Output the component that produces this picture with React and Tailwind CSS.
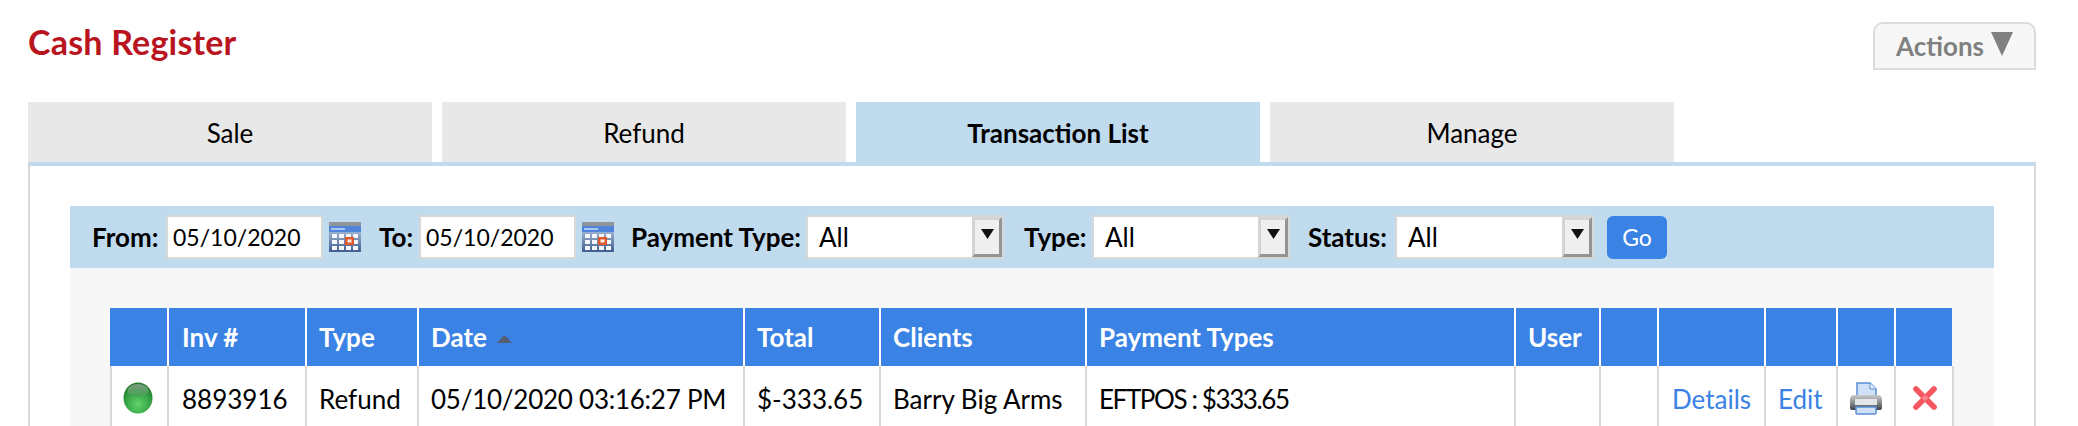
import React from "react";

const Calendar = () => (
  <svg width="32" height="30" viewBox="0 0 32 30" className="block shrink-0 blur-[0.4px]">
    <defs>
      <linearGradient id="calBody" x1="0" y1="0" x2="0" y2="1">
        <stop offset="0" stopColor="#b4c8e4" />
        <stop offset="1" stopColor="#3f5f8e" />
      </linearGradient>
    </defs>
    <rect x="0" y="0" width="32" height="5" fill="#8f9499" />
    <rect x="0" y="4" width="32" height="26" fill="url(#calBody)" />
    <rect x="0" y="4" width="32" height="6" fill="#4f84da" />
    <rect x="2" y="6" width="14" height="2" fill="#a8c6f0" />
    {[3, 10, 17, 24].map((x) =>
      [12, 18, 24].map((y) => <rect key={`${x}-${y}`} x={x} y={y} width="5" height="4" fill="#f4f7fc" />)
    )}
    <rect x="16" y="15" width="9" height="8" fill="#e2582e" />
    <rect x="18.5" y="17.5" width="4" height="3" fill="#f7f2ea" />
  </svg>
);

const Select = ({ width, label = "All" }) => (
  <div className={`flex h-[44px] shrink-0 border-2 border-[#d8d8d8] bg-white ${width}`}>
    <span className="flex-1 self-center pl-[11px] text-[26px] font-normal leading-none text-black">{label}</span>
    <div className="flex h-full w-[30px] items-center justify-center border-[3px] border-b-[#949494] border-l-[#d4d4d4] border-r-[#949494] border-t-[#d4d4d4] bg-[#efefef] pb-[6px]">
      <svg width="13" height="10" viewBox="0 0 13 10"><path d="M0 0h13L6.5 10z" fill="#111" /></svg>
    </div>
  </div>
);

const DateInput = () => (
  <div className="flex h-[44px] w-[157px] shrink-0 items-center border-2 border-[#d8d8d8] bg-white pl-[5px] text-[23px] font-normal leading-none text-black">
    05/10/2020
  </div>
);

const Orb = () => (
  <svg width="30" height="32" viewBox="0 0 30 32" className="block blur-[0.4px]">
    <defs>
      <radialGradient id="orb" cx="0.5" cy="0.7" r="0.65">
        <stop offset="0" stopColor="#5ed36b" />
        <stop offset="0.65" stopColor="#37a345" />
        <stop offset="1" stopColor="#1f7a2c" />
      </radialGradient>
      <linearGradient id="orbTop" x1="0" y1="0" x2="0" y2="1">
        <stop offset="0" stopColor="#7c9a80" />
        <stop offset="1" stopColor="#3fa64c" />
      </linearGradient>
    </defs>
    <ellipse cx="15" cy="16" rx="14.5" ry="15.5" fill="url(#orb)" />
    <ellipse cx="15" cy="8.5" rx="10.5" ry="6.5" fill="url(#orbTop)" />
  </svg>
);

const Printer = () => (
  <svg width="34" height="33" viewBox="0 0 34 33" className="block blur-[0.4px]">
    <defs>
      <linearGradient id="prBody" x1="0" y1="0" x2="0" y2="1">
        <stop offset="0" stopColor="#c9cccf" />
        <stop offset="0.5" stopColor="#8a8d90" />
        <stop offset="1" stopColor="#3e4145" />
      </linearGradient>
    </defs>
    <path d="M8 1h13l6 6v10H8z" fill="#cfe0f7" stroke="#5b8fd6" strokeWidth="1.5" />
    <path d="M21 1v6h6" fill="#e8f0fb" stroke="#5b8fd6" strokeWidth="1" />
    <path d="M5 13h24q4 0 4 5v8q0 2-3 2H4q-3 0-3-2v-8q0-5 4-5z" fill="url(#prBody)" />
    <rect x="6" y="17" width="22" height="6" fill="#e4e6e8" />
    <path d="M7 25h20v6q0 1-1 1H8q-1 0-1-1z" fill="#cfe0f7" stroke="#5b8fd6" strokeWidth="1.5" />
  </svg>
);

const XIcon = () => (
  <svg width="28" height="28" viewBox="0 0 28 28" className="block blur-[0.4px]">
    <path d="M7 3 L14 10 L21 3 Q23 1 25 3 Q27 5 25 7 L18 14 L25 21 Q27 23 25 25 Q23 27 21 25 L14 18 L7 25 Q5 27 3 25 Q1 23 3 21 L10 14 L3 7 Q1 5 3 3 Q5 1 7 3 Z" fill="#f6565f" />
    <path d="M14 10.5 L17.5 14 L14 17.5 L10.5 14 Z" fill="#f9838a" />
  </svg>
);

const widths = [59, 138, 112, 326, 136, 206, 429, 85, 58, 107, 72, 58, 58];
const heads = ["", "Inv #", "Type", "Date", "Total", "Clients", "Payment Types", "User", "", "", "", "", ""];
const cell = "border-r-2 border-r-[#d8d8d8] px-[12px] pt-[2px] text-left align-middle";

export default function App() {
  return (
    <div className="h-[426px] overflow-hidden bg-white pl-[28px] pr-[42px] font-['Lato','Carlito',sans-serif] text-black">
      <div className="flex h-[102px] items-start justify-between">
        <h1 className="pt-[23px] text-[34px] font-bold leading-[38px] tracking-[0.2px] text-[#b9151f]">Cash Register</h1>
        <button className="mt-[22px] flex h-[48px] w-[163px] items-center justify-center gap-[7px] rounded-t-[10px] border-2 border-[#dcdcdc] bg-[#f7f7f7] text-[26px] font-bold text-[#808080]">
          Actions
          <svg width="22" height="24" viewBox="0 0 22 24" className="mb-[4px]"><path d="M0 0h22L11 24z" fill="#808080" /></svg>
        </button>
      </div>

      <div className="flex gap-[10px]">
        {["Sale", "Refund", "Transaction List", "Manage"].map((t, i) => (
          <div
            key={t}
            className={`flex h-[60px] w-[404px] items-center justify-center pt-[2px] text-[26px] ${i === 2 ? "bg-[#c0daee] font-bold" : "bg-[#e8e8e8]"}`}
          >
            {t}
          </div>
        ))}
      </div>

      <div className="h-[300px] border-x-2 border-t-4 border-x-[#d8d8d8] border-t-[#c0daee] px-[40px] pt-[40px]">
        <div className="flex h-[62px] items-center bg-[#c0daee] pl-[22px] text-[26px] font-bold">
          <span className="w-[74px] shrink-0">From:</span>
          <DateInput />
          <div className="ml-[6px] mr-[18px]"><Calendar /></div>
          <span className="w-[40px] shrink-0">To:</span>
          <DateInput />
          <div className="ml-[6px] mr-[17px]"><Calendar /></div>
          <span className="w-[175px] shrink-0 whitespace-nowrap">Payment Type:</span>
          <Select width="w-[198px]" />
          <span className="ml-[20px] w-[68px] shrink-0">Type:</span>
          <Select width="w-[198px]" />
          <span className="ml-[18px] w-[87px] shrink-0">Status:</span>
          <Select width="w-[199px]" />
          <button className="ml-[13px] flex h-[43px] w-[60px] items-center justify-center rounded-[6px] bg-[#3a82e4] text-[23px] font-normal text-white">Go</button>
        </div>

        <div className="h-full bg-[#f7f7f7] pl-[40px] pt-[40px]">
          <table className="table-fixed border-separate border-spacing-0" style={{ width: 1842 }}>
            <colgroup>
              {widths.map((w, i) => <col key={i} style={{ width: w }} />)}
            </colgroup>
            <thead>
              <tr className="h-[58px] bg-[#3a82e4]">
                {heads.map((h, i) => (
                  <th
                    key={i}
                    className={`border-r-2 bg-clip-padding text-left align-middle text-[26px] font-bold text-white ${i === 1 ? "px-[13px]" : "px-[12px]"} ${i === 12 ? "border-r-[#f7f7f7]" : "border-r-white"}`}
                  >
                    {h === "Date" ? (
                      <span className="flex items-center gap-[10px]">
                        Date
                        <svg width="15" height="8" viewBox="0 0 15 8" className="mt-[4px]"><path d="M0 8h15L7.5 0z" fill="#555f72" /></svg>
                      </span>
                    ) : h}
                  </th>
                ))}
              </tr>
            </thead>
            <tbody>
              <tr className="h-[64px] bg-white text-[26px]">
                <td className="border-x-2 border-x-[#d8d8d8] pl-[11px] align-middle"><Orb /></td>
                <td className={`${cell} pl-[13px]`}>8893916</td>
                <td className={cell}>Refund</td>
                <td className={`${cell} whitespace-nowrap tracking-[-0.25px]`}>05/10/2020 03:16:27 PM</td>
                <td className={cell}>$-333.65</td>
                <td className={`${cell} whitespace-nowrap`}>Barry Big Arms</td>
                <td className={`${cell} whitespace-nowrap tracking-[-1.4px]`}>EFTPOS : $333.65</td>
                <td className={cell}></td>
                <td className={cell}></td>
                <td className={`${cell} pl-[13px] text-[#3a82e4]`}>Details</td>
                <td className={`${cell} text-[#3a82e4]`}>Edit</td>
                <td className="border-r-2 border-r-[#d8d8d8] pl-[11px] align-middle"><Printer /></td>
                <td className="border-r-2 border-r-[#d8d8d8] pl-[15px] align-middle"><XIcon /></td>
              </tr>
            </tbody>
          </table>
        </div>
      </div>
    </div>
  );
}
